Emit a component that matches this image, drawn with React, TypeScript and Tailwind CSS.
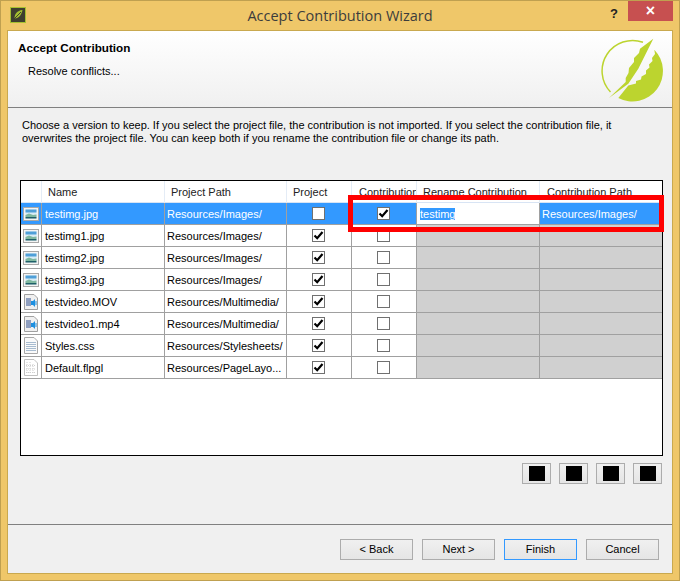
const rows = [
  { name: 'testimg.jpg', path: 'Resources/Images/', icon: 'image', project: false, contribution: true, active: true },
  { name: 'testimg1.jpg', path: 'Resources/Images/', icon: 'image', project: true, contribution: false },
  { name: 'testimg2.jpg', path: 'Resources/Images/', icon: 'image', project: true, contribution: false },
  { name: 'testimg3.jpg', path: 'Resources/Images/', icon: 'image', project: true, contribution: false },
  { name: 'testvideo.MOV', path: 'Resources/Multimedia/', icon: 'video', project: true, contribution: false },
  { name: 'testvideo1.mp4', path: 'Resources/Multimedia/', icon: 'video', project: true, contribution: false },
  { name: 'Styles.css', path: 'Resources/Stylesheets/', icon: 'text', project: true, contribution: false },
  { name: 'Default.flpgl', path: 'Resources/PageLayo...', icon: 'dots', project: true, contribution: false },
];

const columns = 'grid grid-cols-[21px_123px_122px_65px_65px_123px_122px]';

function FileIcon({ kind }: { kind: string }) {
  if (kind === 'image') {
    return (
      <svg width="16" height="14" viewBox="0 0 16 14">
        <rect x="0.5" y="0.5" width="15" height="13" fill="#f4f4f4" stroke="#a8a8a8" />
        <rect x="2.5" y="2.5" width="11" height="9" fill="#d8ecf6" />
        <rect x="2.5" y="2.5" width="11" height="3" fill="#4f9fd8" />
        <path d="M2.5 8 L6 6.5 L10 8 L13.5 7.5 V10 H2.5 Z" fill="#7fb8a0" />
        <rect x="2.5" y="10" width="11" height="1.5" fill="#1f5f68" />
      </svg>
    );
  }
  if (kind === 'video') {
    return (
      <svg width="14" height="16" viewBox="0 0 14 16">
        <path d="M0.5 0.5 H10 L13.5 4 V15.5 H0.5 Z" fill="#f0f0f0" stroke="#a0a0a0" />
        <path d="M2 5 H7 M2 7 H7 M2 9 H7 M2 11 H7" stroke="#2f4f8f" />
        <path d="M7 7 H9 L11 5 V13 L9 11 H7 Z" fill="#1e90e0" />
        <path d="M12 7 V11" stroke="#1e90e0" />
      </svg>
    );
  }
  if (kind === 'text') {
    return (
      <svg width="14" height="17" viewBox="0 0 14 17">
        <path d="M0.5 0.5 H10 L13.5 4 V16.5 H0.5 Z" fill="#fafafa" stroke="#a8a8a8" />
        <path d="M2 5.5 H12 M2 7.5 H12 M2 9.5 H12 M2 11.5 H12 M2 13.5 H12" stroke="#a8bcd0" />
      </svg>
    );
  }
  return (
    <svg width="14" height="17" viewBox="0 0 14 17">
      <path d="M0.5 0.5 H10 L13.5 4 V16.5 H0.5 Z" fill="#fff" stroke="#c0c0c0" />
      <path d="M3 3 V15 M6 3 V15 M9 5 V15 M2 6.5 H12 M2 10 H12 M2 13.5 H12" stroke="#cfcfcf" strokeDasharray="1 1" />
    </svg>
  );
}

function Check({ checked }: { checked: boolean }) {
  return (
    <span className="flex h-[13px] w-[13px] items-center justify-center border border-[#707070] bg-white">
      {checked && (
        <svg width="11" height="11" viewBox="0 0 11 11">
          <path d="M1.5 5.5 L4.2 8.2 L9.5 2" fill="none" stroke="#000" strokeWidth="2.2" />
        </svg>
      )}
    </span>
  );
}

function WizardButton({ label, focused }: { label: string; focused?: boolean }) {
  return (
    <button
      className={
        focused
          ? 'h-[21px] w-[73px] border border-[#3399ff] bg-gradient-to-b from-[#f0f0f0] to-[#e5e5e5] text-black'
          : 'h-[21px] w-[73px] border border-[#acacac] bg-gradient-to-b from-[#f0f0f0] to-[#e5e5e5] text-black'
      }
    >
      {label}
    </button>
  );
}

function ToolButton() {
  return (
    <span className="flex h-[21px] w-[29px] items-center justify-center border border-[#acacac] bg-gradient-to-b from-[#f0f0f0] to-[#e5e5e5]">
      <span className="h-[15px] w-4 bg-black" />
    </span>
  );
}

function Logo() {
  return (
    <svg width="64" height="64" viewBox="0 0 64 64">
      <path d="M42 4.3 A30.5 30.5 0 0 0 9.5 54" fill="none" stroke="#bcd42f" strokeWidth="1.5" />
      <path
        d="M53.3 11.7 A30.5 30.5 0 0 1 17.3 60 L27.3 47.5 L35 45.5 L35 43 L40 41.5 L40.5 38.5 L45 36 L45 32.5 L48.5 29.5 L48 26.5 L51.5 23 L51 20 L54 16 Z"
        fill="#bcd42f"
      />
      <path
        d="M52.3 0.7 L39 10.7 L38 15 L33 20 L33 24 L28 30 L27.5 35 L24.7 40 L24.7 44 L8 60 L27.3 45.7 L37.3 30.7 Z"
        fill="#bcd42f"
      />
    </svg>
  );
}

export default function App() {
  return (
    <div className="flex h-[581px] w-[680px] flex-col overflow-hidden border border-[#bfa050] bg-[#efc769] font-['Liberation_Sans',sans-serif] text-[11px] text-black">
      {/* Title bar */}
      <div className="relative flex h-[29px] shrink-0 items-center justify-center">
        <span className="absolute left-[9px] top-[6px] flex h-[16px] w-[16px] items-center justify-center border border-[#a4c030] bg-[#3f3f2f]">
          <svg width="12" height="12" viewBox="0 0 12 12">
            <path d="M10.5 1 C5 1.5 2.5 5 2.5 9.5 C7 9 9.5 6 10.5 1 Z" fill="#a4c030" />
            <path d="M1 11 L9 3" stroke="#3f3f2f" />
          </svg>
        </span>
        <span className="font-['Open_Sans',sans-serif] text-[14.5px] text-[#3c3c3c]">Accept Contribution Wizard</span>
        <span className="absolute right-[61px] top-[3px] text-[13px] font-bold text-[#222]">?</span>
        <span className="absolute right-[6px] top-0 flex h-[20px] w-[45px] items-center justify-center bg-[#c75050] text-[16px] font-bold text-white">
          ×
        </span>
      </div>

      {/* Body */}
      <div className="mx-[6px] flex min-h-0 flex-1 flex-col border border-[#c9a94f] bg-[#f0f0f0]">
        <div className="flex h-[77px] shrink-0 justify-between border-b border-[#808080] bg-gradient-to-b from-white to-[#f0f0f0]">
          <div className="pl-[10px] pt-[10px]">
            <div className="text-[11.7px] font-bold leading-[14px]">Accept Contribution</div>
            <div className="pl-[10px] pt-[9px] leading-[14px]">Resolve conflicts...</div>
          </div>
          <div className="pr-[7px] pt-[7px]">
            <Logo />
          </div>
        </div>

        <div className="flex min-h-0 flex-1 flex-col pl-[12px] pr-[9px]">
          <p className="pl-[2px] pt-[11px] leading-[13px]">
            Choose a version to keep. If you select the project file, the contribution is not imported. If you select the contribution file, it
            <br />
            overwrites the project file. You can keep both if you rename the contribution file or change its path.
          </p>

          {/* Table */}
          <div className="relative mt-[35px] h-[276px] w-[643px] shrink-0 border border-black bg-white">
            <div className={`${columns} h-[22px] border-b border-[#d8e4f4] leading-[22px] text-[#222]`}>
              <span className="border-r border-[#e4ecf6]" />
              <span className="border-r border-[#e4ecf6] pl-[6px]">Name</span>
              <span className="border-r border-[#e4ecf6] pl-[6px]">Project Path</span>
              <span className="border-r border-[#e4ecf6] pl-[6px]">Project</span>
              <span className="overflow-hidden whitespace-nowrap border-r border-[#e4ecf6] pl-[7px]">Contribution</span>
              <span className="border-r border-[#e4ecf6] pl-[6px]">Rename Contribution</span>
              <span className="pl-[7px]">Contribution Path</span>
            </div>
            {rows.map((row) => (
              <div key={row.name} className={`${columns} h-[22px] border-b border-[#a0a0a0] leading-[19px]`}>
                <span className={row.active ? 'flex items-center justify-center border-r border-[#a0a0a0] bg-[#3399ff]' : 'flex items-center justify-center border-r border-[#a0a0a0]'}>
                  <FileIcon kind={row.icon} />
                </span>
                <span className={row.active ? 'border-r border-[#a0a0a0] bg-[#3399ff] pl-[3px] pt-[2px] text-white' : 'border-r border-[#a0a0a0] pl-[3px] pt-[2px]'}>
                  {row.name}
                </span>
                <span className={row.active ? 'border-r border-[#a0a0a0] bg-[#3399ff] pl-[2px] pt-[2px] text-white' : 'border-r border-[#a0a0a0] pl-[2px] pt-[2px]'}>
                  {row.path}
                </span>
                <span className={row.active ? 'flex items-center justify-center border-r border-[#a0a0a0] bg-[#3399ff] pr-[1px]' : 'flex items-center justify-center border-r border-[#a0a0a0] pr-[1px]'}>
                  <Check checked={row.project} />
                </span>
                <span className={row.active ? 'flex items-center justify-center border-r border-[#a0a0a0] bg-[#3399ff] pr-[1px]' : 'flex items-center justify-center border-r border-[#a0a0a0] pr-[1px]'}>
                  <Check checked={row.contribution} />
                </span>
                {row.active ? (
                  <>
                    <span className="border-r border-[#a0a0a0] bg-white pl-[3px] pt-[2px]">
                      <span className="bg-[#3399ff] text-white">testimg</span>
                    </span>
                    <span className="bg-[#3399ff] pl-[2px] pt-[2px] text-white">{row.path}</span>
                  </>
                ) : (
                  <>
                    <span className="border-r border-[#a0a0a0] bg-[#d0d0d0]" />
                    <span className="bg-[#d0d0d0]" />
                  </>
                )}
              </div>
            ))}
            {/* Red callout drawn over the table */}
            <div className="absolute left-[327px] top-[14px] h-[37px] w-[316px] border-[5px] border-[#ff0000]" />
          </div>

          <div className="flex justify-end gap-[8px] pr-[1px] pt-[7px]">
            <ToolButton />
            <ToolButton />
            <ToolButton />
            <ToolButton />
          </div>
        </div>

        {/* Footer */}
        <div className="flex h-[49px] shrink-0 justify-end gap-[9px] border-t border-[#808080] pr-[13px] pt-[14px]">
          <WizardButton label="< Back" />
          <WizardButton label="Next >" />
          <WizardButton label="Finish" focused />
          <WizardButton label="Cancel" />
        </div>
      </div>
      <div className="h-[6px] shrink-0" />
    </div>
  );
}
